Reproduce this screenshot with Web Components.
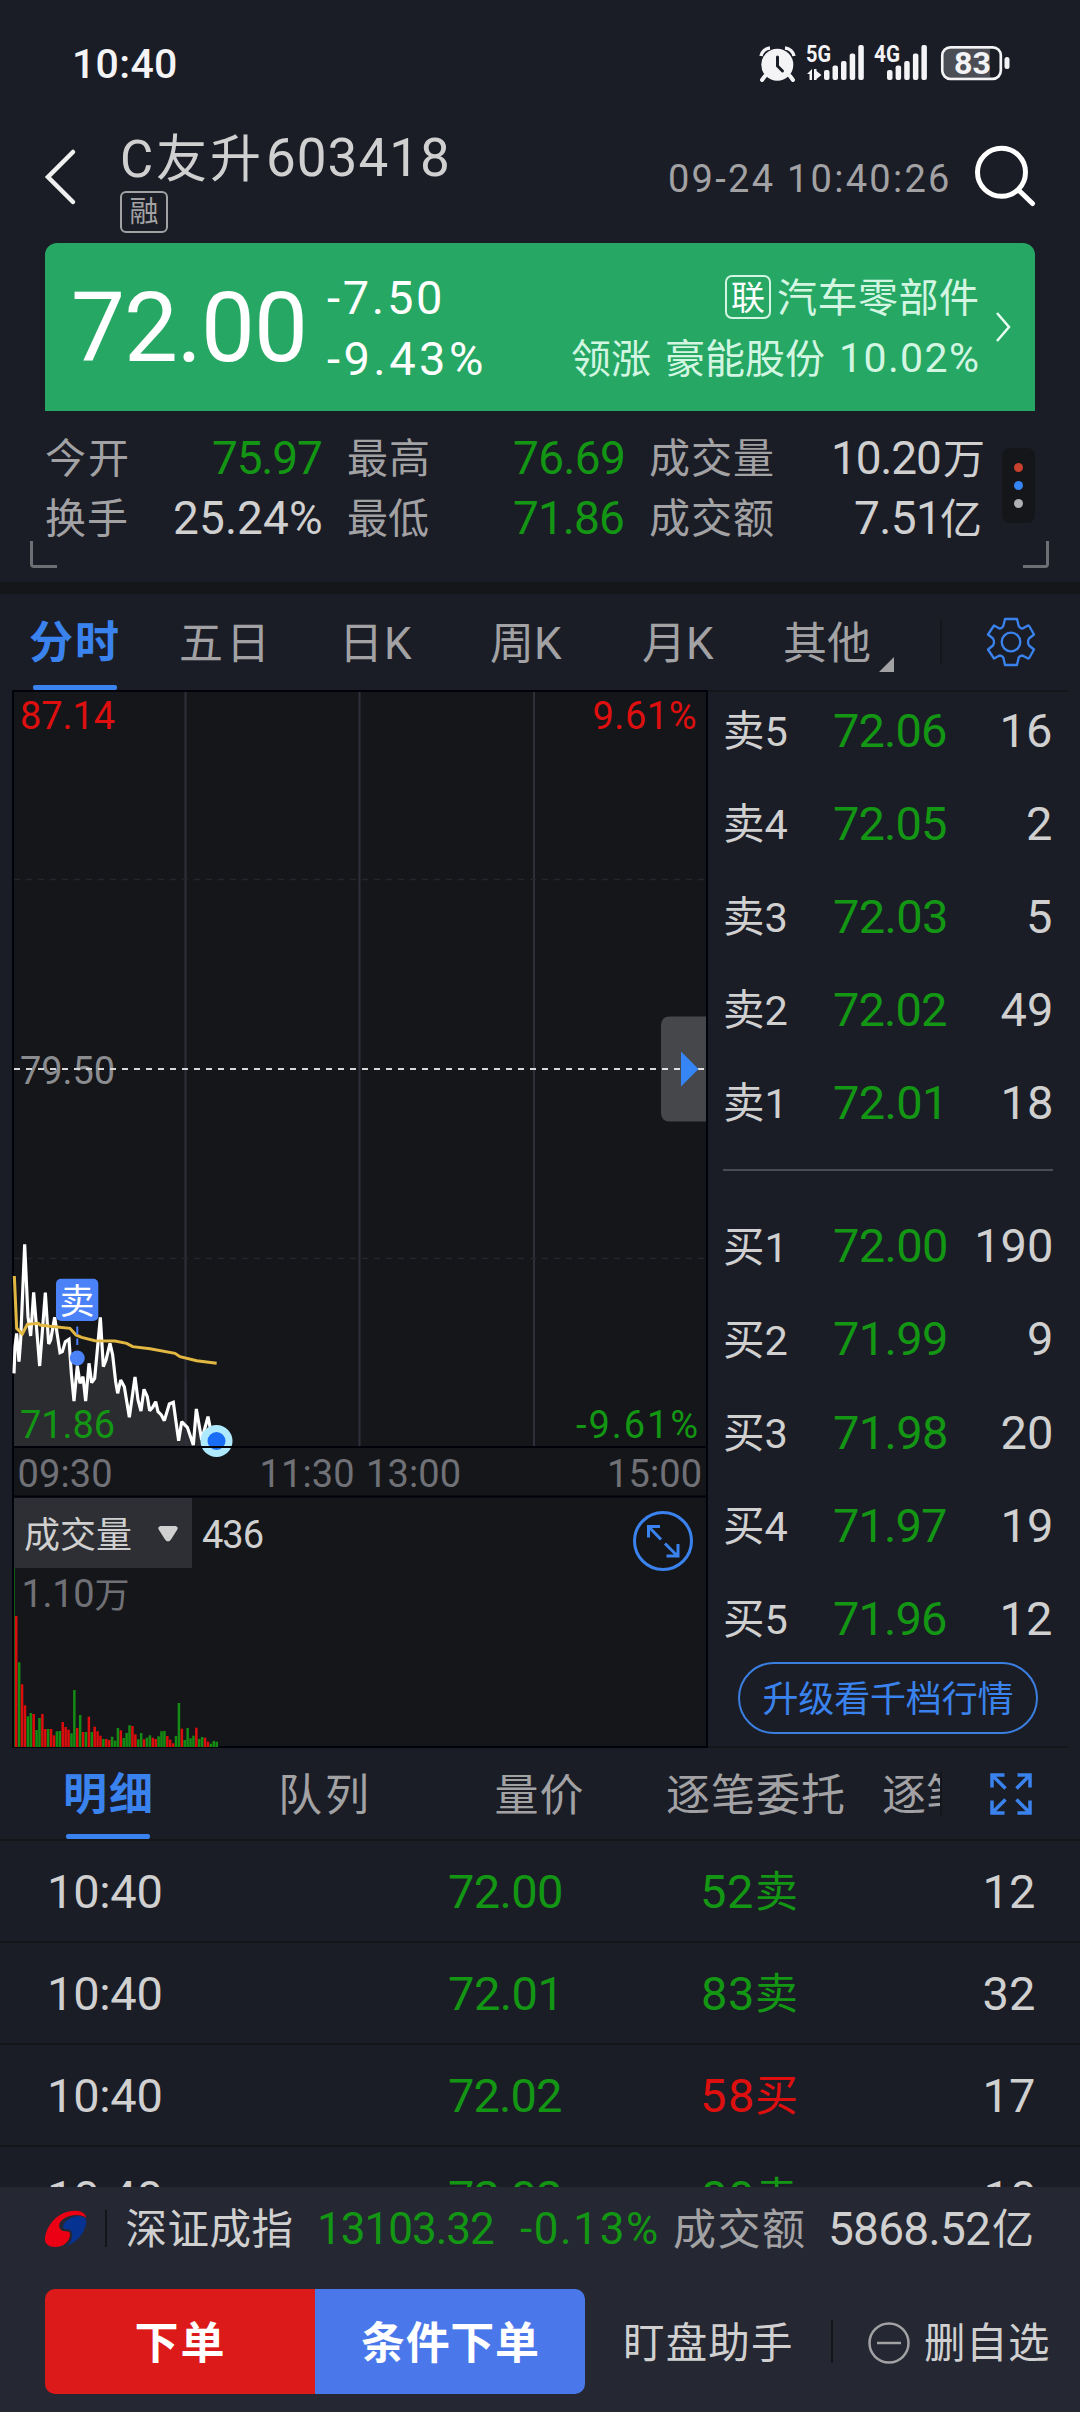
<!DOCTYPE html>
<html lang="zh-CN">
<head>
<meta charset="utf-8">
<title>C友升 603418</title>
<style>
  html, body {
    margin: 0;
    padding: 0;
  }
  body {
    --bg: #1b1d26;
    --panel: #15161a;
    --text: #d0d0d0;
    --muted: #a2a2a4;
    --blue: #3a83ee;
    --green: #139613;
    --red: #de0f0f;
    width: 1080px;
    height: 2412px;
    overflow: hidden;
    background: var(--bg);
    color: var(--text);
    font-family: Roboto, "Noto Sans CJK SC", sans-serif;
  }
</style>
</head>
<body>
<stock-page></stock-page>

<script>
// shared by every component
const baseStyle = `
  :host { display: block; box-sizing: border-box; }
  * { box-sizing: border-box; }
  svg { display: block; flex: none; overflow: visible; }
  .row { display: flex; align-items: center; }
  .push { margin-left: auto; }
  .up { color: var(--red); }
  .down { color: var(--green); }
  .muted { color: var(--muted); }
`;

const measureCtx = document.createElement('canvas').getContext('2d');

// Text trimmed to its ink. size = font size, w = wanted ink width, gap = left margin
class FitText extends HTMLElement {
  constructor() {
    super();
    this.attachShadow({ mode: 'open' }).innerHTML = `
      <style>
        :host { display: block; flex: none; }
        span { display: block; position: relative; white-space: pre; width: max-content; }
      </style>
      <span><slot></slot></span>`;
  }

  connectedCallback() {
    const size = this.getAttribute('size') || 40;
    const text = this.textContent;
    this.style.fontSize = size + 'px';
    this.style.lineHeight = size + 'px';
    if (this.hasAttribute('gap')) {
      this.style.marginLeft = this.getAttribute('gap') + 'px';
    }
    const cs = getComputedStyle(this);
    measureCtx.font = cs.fontWeight + ' ' + size + 'px ' + cs.fontFamily;
    const m = measureCtx.measureText(text);
    const ink = m.actualBoundingBoxLeft + m.actualBoundingBoxRight;
    const w = parseFloat(this.getAttribute('w')) || ink;
    const span = this.shadowRoot.querySelector('span');
    this.style.width = w + 'px';
    span.style.marginLeft = m.actualBoundingBoxLeft + 'px';
    span.style.top = (this.getAttribute('dy') || 0) + 'px';
    if (text.length > 1) {
      span.style.letterSpacing = (w - ink) / (text.length - 1) + 'px';
    }
  }
}
customElements.define('fit-text', FitText);

function define(name, template) {
  customElements.define(name, class extends HTMLElement {
    constructor() {
      super();
      this.attachShadow({ mode: 'open' }).innerHTML = '<style>' + baseStyle + '</style>' + template;
    }
  });
}

define('status-bar', `
  <style>
    :host { height: 126px; padding: 0 71px 0 75px; color: #f4f4f6; font-weight: 500; }
    .row { height: 127px; }
    svg { margin-top: -1px; }
    svg text { font: 700 24px Roboto, sans-serif; fill: #f4f4f6; }
  </style>
  <div class="row">
    <fit-text size="41" w="101" dy=".5">10:40</fit-text>
    <svg class="push" width="250" height="38" viewBox="759 44 250 38">
      <g fill="#f4f4f6">
        <circle cx="777.3" cy="64.8" r="16"/>
        <path d="M765 76l-3 4M790 76l3 4" stroke="#f4f4f6" stroke-width="4" stroke-linecap="round"/>
        <path d="M761 56a10 10 0 0 1 9-8M785 48a10 10 0 0 1 9 8" fill="none" stroke="#f4f4f6" stroke-width="3.5"/>
        <path d="M777.5 57v9l5 5" fill="none" stroke="#1b1d26" stroke-width="3" stroke-linecap="round"/>
        <path d="M807 74l5-5v11h-2.500v-6zM814 69h2.500v2l5 4-5 4v1H814z"/>
        <rect x="824" y="70" width="5.500" height="10" rx="2"/>
        <rect x="832.500" y="65.500" width="5.500" height="14.500" rx="2"/>
        <rect x="841" y="61" width="5.500" height="19" rx="2"/>
        <rect x="849.700" y="53.500" width="5.500" height="26.500" rx="2"/>
        <rect x="858.300" y="45" width="5.500" height="35" rx="2"/>
        <rect x="887" y="70" width="5.500" height="10" rx="2"/>
        <rect x="895.600" y="65.500" width="5.500" height="14.500" rx="2"/>
        <rect x="904.200" y="61" width="5.500" height="19" rx="2"/>
        <rect x="912.900" y="53.500" width="5.500" height="26.500" rx="2"/>
        <rect x="921.400" y="45" width="5.500" height="35" rx="2"/>
        <rect x="1004.500" y="57" width="5" height="12" rx="2.500"/>
      </g>
      <rect x="944" y="49" width="46" height="28" fill="#4c4e55"/>
      <rect x="942.300" y="47.300" width="58.500" height="31.500" rx="8" fill="none" stroke="#f4f4f6" stroke-width="2.700"/>
      <text x="806" y="62" textLength="25" lengthAdjust="spacingAndGlyphs">5G</text>
      <text x="874" y="62" textLength="26" lengthAdjust="spacingAndGlyphs">4G</text>
      <text x="954" y="74" textLength="37" lengthAdjust="spacingAndGlyphs" style="font-size:31px;font-weight:700">83</text>
    </svg>
  </div>
`);

define('stock-header', `
  <style>
    :host { display: flex; height: 117px; padding: 0 46px 0 45px; }
    .back { margin: 23px 47px 0 0; }
    .name { height: 63px; }
    .tag {
      display: flex;
      align-items: center;
      justify-content: center;
      width: 48px;
      height: 42px;
      margin: 1.500px 0 0 -2px;
      border: 2px solid var(--muted);
      border-radius: 6px;
    }
    .right { height: 105px; margin-left: auto; }
    .right svg { margin: -8px 0 0 26px; }
  </style>
  <svg class="back" width="30" height="56" viewBox="0 0 30 56">
    <path d="M28 3L3 28l25 25" fill="none" stroke="#f0f0f0" stroke-width="4.500" stroke-linecap="round"/>
  </svg>
  <div>
    <div class="row name">
      <fit-text size="51" w="137" dy="1.500">C友升</fit-text>
      <fit-text size="53" w="178" gap="10" dy="1">603418</fit-text>
    </div>
    <div class="tag muted"><fit-text size="29" dy="1">融</fit-text></div>
  </div>
  <div class="row right muted">
    <fit-text size="38" w="278">09-24 10:40:26</fit-text>
    <svg width="60" height="60" viewBox="974 146 60 60">
      <g fill="none" stroke="#fff" stroke-width="5">
        <circle cx="1001.500" cy="173.300" r="24"/>
        <path d="M1019 191.500l13.500 13" stroke-linecap="round"/>
      </g>
    </svg>
  </div>
`);

define('quote-card', `
  <style>
    :host {
      display: flex;
      align-items: center;
      height: 168px;
      margin: 0 45px;
      padding: 0 24px 0 29px;
      border-radius: 12px 12px 0 0;
      background: #26a864;
      color: #fff;
    }
    .col { display: flex; flex-direction: column; justify-content: space-between; height: 107px; }
    .sector { margin-left: auto; align-items: flex-end; color: #d3f6e2; }
    .sector .row { height: 46px; }
    .tag {
      display: flex;
      align-items: center;
      justify-content: center;
      width: 46px;
      height: 44px;
      border: 2px solid #d3f6e2;
      border-radius: 7px;
      color: #fff;
    }
    .change { margin: 0 0 0 24px; height: 107px; }
    .change .row { height: 46px; }
  </style>
  <fit-text size="96" w="229" dy="1">72.00</fit-text>
  <div class="col change">
    <div class="row"><fit-text size="47" w="113" dy=".5">-7.50</fit-text></div>
    <div class="row"><fit-text size="47" w="155" dy=".5">-9.43%</fit-text></div>
  </div>
  <div class="col sector">
    <div class="row">
      <span class="tag"><fit-text size="34" dy="1">联</fit-text></span>
      <fit-text size="40" w="200" gap="7" dy="2">汽车零部件</fit-text>
    </div>
    <div class="row">
      <fit-text size="40" w="78" dy="2">领涨</fit-text>
      <fit-text size="40" w="157" gap="17" dy="2">豪能股份</fit-text>
      <fit-text size="41" w="136" gap="18" dy="1">10.02%</fit-text>
    </div>
  </div>
  <svg width="16" height="32" viewBox="0 0 16 32" style="margin-left:17px">
    <path d="M2 2l12 14L2 30" fill="none" stroke="#e8fff2" stroke-width="2.500"/>
  </svg>
`);

define('stock-stats', `
  <style>
    :host { display: flex; height: 171px; padding: 17px 31px 0 30px; }
    .grid {
      display: grid;
      grid-template-columns: 275px 275px 333px;
      grid-template-rows: 60px 60px;
      column-gap: 27px;
      flex: none;
      margin-left: -14px;
      width: 953px;
    }
    .left { display: flex; flex-direction: column; justify-content: flex-end; width: 30px; flex: none; }
    .right { display: flex; flex-direction: column; justify-content: space-between; align-items: flex-end; width: 49px; flex: none; margin-left: auto; }
    .corner { width: 27px; height: 27px; margin-bottom: 14px; border: solid #6e6f74; border-width: 0 0 3px 3px; border-radius: 0 0 0 4px; }
    .right .corner { width: 26px; border-width: 0 3px 3px 0; border-radius: 0 0 4px 0; }
    .more {
      display: flex;
      flex-direction: column;
      align-items: center;
      justify-content: center;
      gap: 9px;
      width: 33px;
      height: 75px;
      margin: 20px 14px 0 0;
      border-radius: 8px;
      background: var(--panel);
    }
    .more i { width: 9px; height: 9px; border-radius: 50%; background: #b0b0b2; }
  </style>
  <div class="left"><div class="corner"></div></div>
  <div class="grid">
    <div class="row muted"><fit-text size="41" w="81" dy="1.500">今开</fit-text><fit-text class="push down" size="46" w="108">75.97</fit-text></div>
    <div class="row muted"><fit-text size="41" w="80" dy="1.500">最高</fit-text><fit-text class="push down" size="46" w="109">76.69</fit-text></div>
    <div class="row"><fit-text class="muted" size="41" w="123" dy="1.500">成交量</fit-text><fit-text class="push" size="46" w="106">10.20</fit-text><fit-text size="42" gap="4" w="39" dy="1.500">万</fit-text></div>
    <div class="row"><fit-text class="muted" size="41" w="81" dy="1.500">换手</fit-text><fit-text class="push" size="46" w="146">25.24%</fit-text></div>
    <div class="row muted"><fit-text size="41" w="80" dy="1.500">最低</fit-text><fit-text class="push down" size="46" w="109">71.86</fit-text></div>
    <div class="row"><fit-text class="muted" size="41" w="123" dy="1.500">成交额</fit-text><fit-text class="push" size="46" w="78">7.51</fit-text><fit-text size="42" gap="8" w="42" dy="1.500">亿</fit-text></div>
  </div>
  <div class="right">
    <div class="more"><i style="background:#c8402e"></i><i style="background:#3585f5"></i><i></i></div>
    <div class="corner"></div>
  </div>
`);

define('period-tabs', `
  <style>
    :host { display: flex; height: 108px; padding: 12px 45px 0 30px; background: linear-gradient(var(--panel) 12px, transparent 12px); }
    .tab { display: flex; flex-direction: column; justify-content: flex-end; height: 96px; }
    .tab .row { height: 91px; padding-top: 4px; }
    .on { color: var(--blue); font-weight: 700; }
    .bar { width: 84px; height: 5px; margin-left: 3px; border-radius: 2px; background: var(--blue); }
    .rest { height: 96px; flex: 1; }
    .arrow { margin: 44px 0 0 9px; }
    .split { width: 2px; height: 45px; margin: 0 45px 0 46px; background: #15161c; }
  </style>
  <div class="tab on">
    <div class="row"><fit-text size="44" w="88" dy="1.500">分时</fit-text></div>
    <div class="bar"></div>
  </div>
  <div class="row rest muted">
    <fit-text size="44" w="82" gap="63" dy="1.500">五日</fit-text>
    <fit-text size="44" w="66" gap="83" dy="1.500">日K</fit-text>
    <fit-text size="44" w="71" gap="79" dy="1.500">周K</fit-text>
    <fit-text size="44" w="71" gap="81" dy="1.500">月K</fit-text>
    <fit-text size="44" w="86" gap="70" dy="1.500">其他</fit-text>
    <svg class="arrow" width="15" height="15"><path d="M15 0v15H0z" fill="#a2a2a4"/></svg>
    <div class="split"></div>
    <svg width="48" height="48" viewBox="0 0 48 48" fill="none" stroke="#3a83ee" stroke-width="2.300" stroke-linejoin="round">
      <path d="M18 1h12l1.700 7Q33 10.500 35.500 10.500L41 7.500Q42 7.500 42.500 8.500L47 16.500 42 20.500Q40 24 42 27.500L47 31.500 42.500 39.500Q42 40.500 41 40.500L35.500 37.500Q33 37.500 31.700 39.500L30 47H18L16.300 39.500Q15 37.500 12.500 37.500L7 40.500 1 31.500 6 27.500Q8 24 6 20.500L1 16.500 7 7.500 12.500 10.500Q15 10.500 16.300 8z"/>
      <circle cx="24" cy="24" r="9.300"/>
    </svg>
  </div>
`);

// top edge of every minute bar in thirds of a pixel (801 is the floor), r = rising, g = falling
const volumes = '408r 547g 613r 676r 709g 699g 702r 750g 714g 702r 747r 747g 747r 766r 754g 753g 726r 741r 749r 760g 630g 744r 705g 756r 756g 710r 756g 740r 754r 767r 777g 777r 780r 770g 782g 744g 751r 774g 759g 736g 738r 763r 778g 759g 778r 773g 766g 773r 777r 769g 754g 753g 768r 779r 790r 768g 669g 746r 780g 744g 775g 767g 743r 777g 771g 773r 785r 791g 783g 785g';
const bars = volumes.split(' ').map((v, i) => {
  const h = (801 - parseInt(v)) / 3;
  const x = 15 + i * 2.905;
  return `<rect x="${x.toFixed(2)}" y="${(1747 - h).toFixed(1)}" width="2.500" height="${h.toFixed(1)}" fill="${v.endsWith('r') ? '#dc0d0d' : '#148c14'}"/>`;
}).join('');

const price = '42,520 45,440 50,400 57,485 62,420 74,133 84,350 92,408 101,277 119,498 136,278 146,432 152,420 164,352 180,458 187,455 196,425 207,418 214,520 222,603 232,497 240,550 249,530 257,603 267,490 275,548 284,535 301,352 310,500 318,480 330,430 338,465 347,545 353,580 362,540 373,560 388,652 405,531 414,600 423,633 432,568 442,590 449,632 458,622 467,605 474,635 484,645 493,662 508,612 520,607 528,665 536,722 545,665 562,682 580,735 589,627 605,720 624,650 632,690 649,723';
const average = '43,228 50,385 67,402 82,373 115,370 120,375 150,379 210,385 228,405 245,412 285,422 345,423 380,430 398,440 450,446 525,460 540,470 590,482 650,490';

define('minute-chart', `
  <style>
    svg text { font: 38px Roboto, "Noto Sans CJK SC", sans-serif; }
  </style>
  <svg width="696" height="1058" viewBox="12 690 696 1058">
    <rect x="13" y="691" width="694" height="1056" fill="#15161a" stroke="#02030a" stroke-width="2"/>
    <path d="M185.500 692v754M359.500 692v754M534 692v754" stroke="#2e2f3a" stroke-width="2"/>
    <path d="M14 879.500h692M14 1258.500h692" stroke="#25262c" stroke-width="1.500" stroke-dasharray="6 6"/>

    <g transform="translate(0 1200) scale(.33333)" fill="none" stroke-linejoin="miter" stroke-miterlimit="2">
      <path d="M${price} L649,740 42,740z" fill="#2b2c30"/>
      <path d="M557 540V740" stroke="#2e2f3a" stroke-width="6"/>
      <path d="M${price}" stroke="#fff" stroke-width="9.500"/>
      <path d="M${average}" stroke="#e2b843" stroke-width="9"/>
    </g>

    <circle cx="216.500" cy="1441" r="16" fill="#aee9fd"/>
    <circle cx="216.500" cy="1441" r="9" fill="#1a6df5"/>
    <rect x="12" y="1446" width="696" height="2" fill="#02030a"/>
    <rect x="12" y="1495.500" width="696" height="2" fill="#02030a"/>

    <path d="M77.300 1326.500v18.500" stroke="#4b82f8" stroke-width="2" stroke-dasharray="8 4"/>
    <circle cx="77.300" cy="1358" r="7.500" fill="#4b82f8"/>
    <rect x="56" y="1278.700" width="42.300" height="42.300" rx="5" fill="#4b82f8"/>
    <text x="59.500" y="1313.500" fill="#fff" style="font-size:35px">卖</text>

    <text x="20" y="728.500" fill="#de0f0f" textLength="95">87.14</text>
    <text x="592.500" y="728.500" fill="#de0f0f" textLength="104">9.61%</text>
    <text x="20" y="1084" fill="#8b8c90" textLength="95">79.50</text>
    <text x="20" y="1438" fill="#139613" textLength="95">71.86</text>
    <text x="576" y="1438" fill="#139613" textLength="122">-9.61%</text>

    <path d="M14 1069h692" stroke="#d8d8d8" stroke-width="2" stroke-dasharray="6 6"/>
    <path d="M706 1016.500h-37a8 8 0 0 0-8 8v89a8 8 0 0 0 8 8h37z" fill="#fff" fill-opacity=".21"/>
    <path d="M681 1051.500l17.500 17.500-17.500 17.500z" fill="#3585f5"/>

    <g fill="#707176">
      <text x="17.500" y="1486.500" textLength="95">09:30</text>
      <text x="259.500" y="1486.500" textLength="95">11:30</text>
      <text x="366" y="1486.500" textLength="95">13:00</text>
      <text x="607" y="1486.500" textLength="95">15:00</text>
    </g>

    <rect x="14" y="1498" width="178" height="70" fill="#2e2f34"/>
    <text x="24" y="1547.500" fill="#d0d0d0" style="font-size:36px">成交量</text>
    <path d="M160.500 1526h15q3.500 1 1.500 4l-6 9.500q-3 4-6 0l-6-9.500q-2-3 1.500-4z" fill="#d0d0d0"/>
    <text x="202" y="1547.500" fill="#d0d0d0" textLength="62">436</text>
    <text x="21.500" y="1607" fill="#707176" textLength="73">1.10</text>
    <text x="94.500" y="1607.500" fill="#707176" style="font-size:35px">万</text>
    <rect x="14" y="1568" width="1" height="179" fill="#125a18"/>
    ${bars}

    <g fill="none" stroke="#3a83ee" stroke-width="3">
      <circle cx="663" cy="1541" r="28.500"/>
      <path d="M648.500 1537.500v-11h11.500M648.500 1526.500l12.500 13M665 1543.500l12.500 12.500M666.500 1556h11.500v-12"/>
    </g>
  </svg>
`);

const bookRow = (label, p, qty) => `
  <div class="row item">
    <fit-text class="label" size="41.500" dy="1.500">${label}</fit-text>
    <fit-text class="down price" size="47" w="${p.endsWith('1') ? 105 : 112}">${p}</fit-text>
    <fit-text class="push" size="47">${qty}</fit-text>
  </div>`;

define('order-book', `
  <style>
    :host { width: 372px; height: 1058px; }
    .frame { width: 360px; height: 1058px; border: solid var(--panel); border-width: 2px 0; }
    .list { display: flex; flex-direction: column; gap: 13.100px; padding: 0 17px; }
    .item { display: grid; grid-template-columns: 109px 1fr auto; height: 80px; }
    .sell { margin-top: -2px; }
    .line { height: 2px; margin: 27px 15px 34.500px; background: #4a4b55; }
    .upgrade {
      display: flex;
      align-items: center;
      justify-content: center;
      height: 72px;
      margin: 4px 0 0 30px;
      width: 300px;
      border: 2px solid #3a7fe0;
      border-radius: 36px;
      color: var(--blue);
    }
  </style>
  <div class="frame">
    <div class="list sell">
      ${bookRow('卖5', '72.06', '16')}
      ${bookRow('卖4', '72.05', '2')}
      ${bookRow('卖3', '72.03', '5')}
      ${bookRow('卖2', '72.02', '49')}
      ${bookRow('卖1', '72.01', '18')}
    </div>
    <div class="line"></div>
    <div class="list">
      ${bookRow('买1', '72.00', '190')}
      ${bookRow('买2', '71.99', '9')}
      ${bookRow('买3', '71.98', '20')}
      ${bookRow('买4', '71.97', '19')}
      ${bookRow('买5', '71.96', '12')}
    </div>
    <div class="upgrade"><fit-text size="36" w="249" dy="1.500">升级看千档行情</fit-text></div>
  </div>
`);

define('detail-tabs', `
  <style>
    :host { display: flex; height: 93px; padding: 0 48px 0 66px; border-bottom: 2px solid var(--panel); }
    .tab { display: flex; flex-direction: column; width: 84px; flex: none; }
    .tab .row { height: 86px; padding-top: 5px; }
    .on { color: var(--blue); font-weight: 700; }
    .bar { height: 5px; border-radius: 2px; background: var(--blue); }
    .rest { width: 790px; height: 92px; overflow: hidden; flex: none; }
    .split { width: 2px; height: 45px; margin-top: 24px; background: #15161c; flex: none; }
  </style>
  <div class="tab on">
    <div class="row"><fit-text size="44" w="85" dy="1.500">明细</fit-text></div>
    <div class="bar"></div>
  </div>
  <div class="row rest muted">
    <fit-text size="44" w="84" gap="132" dy="2">队列</fit-text>
    <fit-text size="44" w="86" gap="130.500" dy="2">量价</fit-text>
    <fit-text size="44" w="177" gap="84.500" dy="2">逐笔委托</fit-text>
    <fit-text size="44" gap="39" dy="2">逐笔</fit-text>
  </div>
  <div class="split"></div>
  <svg width="42" height="42" viewBox="0 0 42 42" fill="none" stroke="#3a83ee" stroke-width="3.500" style="margin:25px 0 0 48px">
    <path d="M2 14.500V2h12.500M2 2l13.500 13.500M27.500 2H40v12.500M40 2L26.500 15.500M2 27.500V40h12.500M2 40l13.500-13.500M27.500 40H40V27.500M40 40L26.500 26.500"/>
  </svg>
`);

const tick = (cls, p, n, side, qty) => `
  <div class="tick">
    <fit-text size="47" w="110.500">10:40</fit-text>
    <fit-text class="down" size="47" w="${p.endsWith('1') ? 105.5 : 112}">${p}</fit-text>
    <div class="row ${cls}"><fit-text size="47" w="49">${n}</fit-text><fit-text size="43" gap="5" dy="1.500">${side}</fit-text></div>
    <fit-text class="push" size="47">${qty}</fit-text>
  </div>`;

define('tick-list', `
  <style>
    :host { height: 346px; overflow: hidden; }
    .tick {
      display: grid;
      grid-template-columns: 399px 254px 1fr auto;
      align-items: center;
      height: 102px;
      padding: 0 46px 0 50px;
      border-bottom: 2px solid var(--panel);
    }
  </style>
  ${tick('down', '72.00', '52', '卖', '12')}
  ${tick('down', '72.01', '83', '卖', '32')}
  ${tick('up', '72.02', '58', '买', '17')}
  ${tick('down', '72.02', '80', '卖', '10')}
`);

define('index-bar', `
  <style>
    :host { height: 83px; padding: 0 46px 0 45px; background: #252732; }
    .row { height: 83px; }
    .split { width: 2px; height: 37px; margin: 0 20px 0 17.500px; background: #14151b; }
  </style>
  <div class="row">
    <svg width="42" height="42" viewBox="45 114 126 126">
      <path d="M45 208C46 170 82 122 135 122C155 122 166 130 169 143C150 130 116 134 96 150C84 162 85 174 96 182C106 186 119 180 120 192C120 215 100 231 76 231C56 231 45 222 45 208Z" fill="#ec0014"/>
      <path d="M168 146C152 132 124 136 106 156C95 169 98 177 110 178C124 178 129 188 126 202C124 214 118 223 108 229C142 216 172 184 168 146Z" fill="#063391"/>
    </svg>
    <div class="split"></div>
    <fit-text size="41.500" w="165" dy="1.500">深证成指</fit-text>
    <fit-text class="down" size="44" w="174" gap="28.500">13103.32</fit-text>
    <fit-text class="down" size="44" w="137" gap="26">-0.13%</fit-text>
    <fit-text class="muted" size="43" w="130" gap="17" dy="1.500">成交额</fit-text>
    <fit-text class="push" size="46" w="159">5868.52</fit-text>
    <fit-text size="42" w="41" gap="3" dy="1.500">亿</fit-text>
  </div>
`);

define('action-bar', `
  <style>
    :host { display: flex; height: 142px; padding: 19px 31px 0 45px; background: #252732; }
    .btn { display: flex; align-items: center; justify-content: center; width: 270px; height: 105px; color: #fff; font-weight: 700; }
    .order { background: #dd1a1a; border-radius: 10px 0 0 10px; }
    .cond { background: #4a78ea; border-radius: 0 10px 10px 0; }
    .row { height: 105px; }
    .split { width: 2px; height: 43px; margin-left: 40px; background: #14151b; }
  </style>
  <div class="btn order"><fit-text size="44" w="87" dy="2">下单</fit-text></div>
  <div class="btn cond"><fit-text size="44" w="176" dy="2">条件下单</fit-text></div>
  <div class="row">
    <fit-text size="41.500" w="165" gap="41" dy="2">盯盘助手</fit-text>
    <div class="split"></div>
    <svg width="42" height="42" viewBox="0 0 42 42" fill="none" stroke="#a2a2a4" stroke-width="2.500" style="margin:2px 15px 0 35px">
      <circle cx="21" cy="21" r="19.500"/>
      <path d="M9 21h24"/>
    </svg>
    <fit-text size="41.500" w="124" dy="2">删自选</fit-text>
  </div>
`);

define('stock-page', `
  <style>
    :host { width: 1080px; height: 2412px; overflow: hidden; }
    .quotes { display: flex; padding-left: 12px; }
  </style>
  <status-bar></status-bar>
  <stock-header></stock-header>
  <quote-card></quote-card>
  <stock-stats></stock-stats>
  <period-tabs></period-tabs>
  <div class="quotes">
    <minute-chart></minute-chart>
    <order-book></order-book>
  </div>
  <detail-tabs></detail-tabs>
  <tick-list></tick-list>
  <index-bar></index-bar>
  <action-bar></action-bar>
`);
</script>
</body>
</html>
